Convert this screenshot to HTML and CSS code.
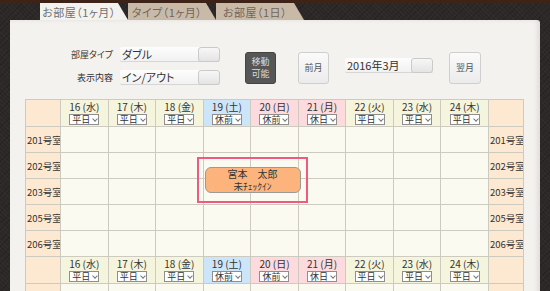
FILE: index.html
```html
<!DOCTYPE html>
<html lang="ja">
<head>
  <meta charset="UTF-8" />
  <title>予約カレンダー</title>
  <link rel="stylesheet" href="styles.css">
</head>
<body>
  <div class="topbar"></div>
  <ul class="tabs">
    <li class="tab active">お部屋（1ヶ月）</li>
    <li class="tab">タイプ（1ヶ月）</li>
    <li class="tab">お部屋（1日）</li>
  </ul>

  <main class="panel">
    <div class="toolbar">
      <div class="fields">
        <label>部屋タイプ</label>
        <div class="field"><span class="field-text">ダブル</span><span class="field-btn"></span></div>
        <label>表示内容</label>
        <div class="field"><span class="field-text">イン/アウト</span><span class="field-btn"></span></div>
      </div>
      <button class="btn dark move-btn">移動<br>可能</button>
      <button class="btn prev-btn">前月</button>
      <div class="field month-field"><span class="field-text">2016年3月</span><span class="field-btn"></span></div>
      <button class="btn next-btn">翌月</button>
    </div>

    <div class="calendar">
      <table>
        <colgroup>
          <col class="room-col"><col><col><col><col><col><col><col><col><col><col class="room-col">
        </colgroup>
        <tr class="head">
          <th class="room"></th>
          <th class="wd"><div class="day">16 (水)</div><span class="sel">平日</span></th>
          <th class="wd"><div class="day">17 (木)</div><span class="sel">平日</span></th>
          <th class="wd"><div class="day">18 (金)</div><span class="sel">平日</span></th>
          <th class="sat"><div class="day">19 (土)</div><span class="sel">休前</span></th>
          <th class="hol"><div class="day">20 (日)</div><span class="sel">休前</span></th>
          <th class="hol"><div class="day">21 (月)</div><span class="sel">休日</span></th>
          <th class="wd"><div class="day">22 (火)</div><span class="sel">平日</span></th>
          <th class="wd"><div class="day">23 (水)</div><span class="sel">平日</span></th>
          <th class="wd"><div class="day">24 (木)</div><span class="sel">平日</span></th>
          <th class="room"></th>
        </tr>
        <tr><td class="room">201号室</td><td></td><td></td><td></td><td></td><td></td><td></td><td></td><td></td><td></td><td class="room">201号室</td></tr>
        <tr><td class="room">202号室</td><td></td><td></td><td></td><td></td><td></td><td></td><td></td><td></td><td></td><td class="room">202号室</td></tr>
        <tr><td class="room">203号室</td><td></td><td></td><td></td><td></td><td></td><td></td><td></td><td></td><td></td><td class="room">203号室</td></tr>
        <tr><td class="room">205号室</td><td></td><td></td><td></td><td></td><td></td><td></td><td></td><td></td><td></td><td class="room">205号室</td></tr>
        <tr><td class="room">206号室</td><td></td><td></td><td></td><td></td><td></td><td></td><td></td><td></td><td></td><td class="room">206号室</td></tr>
        <tr class="head">
          <th class="room"></th>
          <th class="wd"><div class="day">16 (水)</div><span class="sel">平日</span></th>
          <th class="wd"><div class="day">17 (木)</div><span class="sel">平日</span></th>
          <th class="wd"><div class="day">18 (金)</div><span class="sel">平日</span></th>
          <th class="sat"><div class="day">19 (土)</div><span class="sel">休前</span></th>
          <th class="hol"><div class="day">20 (日)</div><span class="sel">休前</span></th>
          <th class="hol"><div class="day">21 (月)</div><span class="sel">休日</span></th>
          <th class="wd"><div class="day">22 (火)</div><span class="sel">平日</span></th>
          <th class="wd"><div class="day">23 (水)</div><span class="sel">平日</span></th>
          <th class="wd"><div class="day">24 (木)</div><span class="sel">平日</span></th>
          <th class="room"></th>
        </tr>
        <tr><td class="room"></td><td></td><td></td><td></td><td></td><td></td><td></td><td></td><td></td><td></td><td class="room"></td></tr>
      </table>

      <div class="booking-focus">
        <div class="booking">
          <div>宮本　太郎</div>
          <div class="status">未ﾁｪｯｸｲﾝ</div>
        </div>
      </div>
    </div>
  </main>
</body>
</html>
```

FILE: styles.css
```css
:root {
  --bg-dark: #2c2828;
  --paper: #f3f2ef;
  --tan: #c9baa8;
  --line: #cdcac0;
  --cell: #fbfaf1;
  --weekday: #f5f4dc;
  --saturday: #cde5f9;
  --holiday: #fcdadd;
  --room: #fde8d1;
  --text-dark: #333;
}

body {
  margin: 0;
  height: 291px;
  overflow: hidden;
  background-color: var(--bg-dark);
  background-image:
    repeating-linear-gradient(45deg, rgba(255,255,255,0.025) 0 1px, transparent 1px 3px),
    repeating-linear-gradient(-45deg, rgba(0,0,0,0.12) 0 1px, transparent 1px 4px);
  font-family: "Noto Sans CJK JP", "Noto Sans", sans-serif;
  color: var(--text-dark);
}

.topbar {
  height: 3px;
  background-color: #3e2418;
}

.tabs {
  display: flex;
  list-style: none;
  margin: 0;
  padding: 0 0 0 40px;
}

.tab {
  width: 88px;
  height: 17px;
  box-sizing: border-box;
  padding-right: 10px;
  background-color: var(--tan);
  clip-path: polygon(0 0, calc(100% - 10px) 0, 100% 100%, 0 100%);
  text-align: center;
  font-size: 11px;
  line-height: 18px;
  letter-spacing: 0.5px;
  color: #6f655c;
  font-feature-settings: "palt";
}

.tab.active {
  background-color: var(--paper);
  color: #707070;
}

.panel {
  margin: 0 10px;
  height: 280px;
  background-color: var(--paper);
  border-radius: 0 3px 0 0;
  box-shadow: inset -3px 0 4px rgba(0,0,0,0.08);
}

/* toolbar */
.toolbar {
  display: flex;
  align-items: flex-start;
  height: 79px;
  box-sizing: border-box;
  padding: 27px 0 0 43px;
}

.fields {
  display: grid;
  grid-template-columns: 60px 100px;
  column-gap: 7px;
  row-gap: 8px;
  align-items: center;
}

.fields label {
  text-align: right;
  font-size: 9px;
  font-feature-settings: "palt";
}

.field {
  display: flex;
  height: 15px;
  box-sizing: border-box;
  background: linear-gradient(#fdfdfd, #f1f1f1);
  border-bottom: 1px solid #d6d6d6;
  border-radius: 2px;
}

.field-text {
  flex: 1;
  padding-left: 2px;
  font-size: 11px;
  line-height: 15px;
  font-feature-settings: "palt";
}

.field-btn {
  width: 22px;
  height: 15px;
  box-sizing: border-box;
  border: 1px solid #cacaca;
  border-radius: 3px;
  background: linear-gradient(#f7f7f7, #e4e4e4);
}

.btn {
  display: flex;
  align-items: center;
  justify-content: center;
  width: 31px;
  height: 32px;
  margin-top: 5px;
  padding: 0;
  border: 1px solid #cfcfcf;
  border-radius: 3px;
  background: linear-gradient(#fafafa, #ebebeb);
  font-family: inherit;
  font-size: 9px;
  line-height: 12px;
  color: #555;
}

.btn.dark {
  background: #565656;
  border-color: #444;
  color: #dcdcdc;
}

.move-btn { margin-left: 25px; }
.prev-btn { margin-left: 22px; }
.next-btn { margin-left: 16px; width: 32px; }

.month-field {
  width: 88px;
  margin: 11px 0 0 16px;
}

/* calendar */
.calendar {
  position: relative;
  margin-left: 15px;
}

table {
  width: 499px;
  table-layout: fixed;
  border-collapse: collapse;
  font-size: 10px;
}

.room-col {
  width: 35px;
}

tr {
  height: 26px;
}

tr.head {
  height: 27px;
}

th, td {
  padding: 0;
  border: 1px solid var(--line);
  background-color: var(--cell);
}

th {
  vertical-align: top;
  font-weight: normal;
}

th.wd { background-color: var(--weekday); }
th.sat { background-color: var(--saturday); }
th.hol { background-color: var(--holiday); }

td.room, th.room {
  background-color: var(--room);
  white-space: nowrap;
  overflow: hidden;
  padding-left: 1px;
  font-size: 9.5px;
}

.day {
  margin-top: 1px;
  line-height: 12px;
  white-space: nowrap;
}

.sel {
  display: flex;
  align-items: center;
  width: 30px;
  height: 11px;
  box-sizing: border-box;
  margin: 1px auto 0;
  padding-left: 2px;
  border: 1px solid #8e8e8e;
  background-color: #fff;
  font-size: 9px;
  line-height: 9px;
  white-space: nowrap;
}

.sel::after {
  content: "";
  flex: none;
  width: 3px;
  height: 3px;
  margin: -2px 0 0 3px;
  border-right: 1px solid #777;
  border-bottom: 1px solid #777;
  transform: rotate(45deg);
}

.booking-focus {
  position: absolute;
  left: 172px;
  top: 58px;
  width: 111px;
  height: 46px;
  box-sizing: border-box;
  border: 2px solid #ee5a80;
  display: flex;
  align-items: center;
  justify-content: center;
}

.booking {
  display: flex;
  flex-direction: column;
  justify-content: center;
  width: 96px;
  height: 26px;
  box-sizing: border-box;
  border: 1px solid #9a9a9a;
  border-radius: 6px;
  background-color: #fdb37c;
  text-align: center;
  font-size: 10px;
  line-height: 12px;
}

.booking .status {
  font-size: 9.5px;
}
```
